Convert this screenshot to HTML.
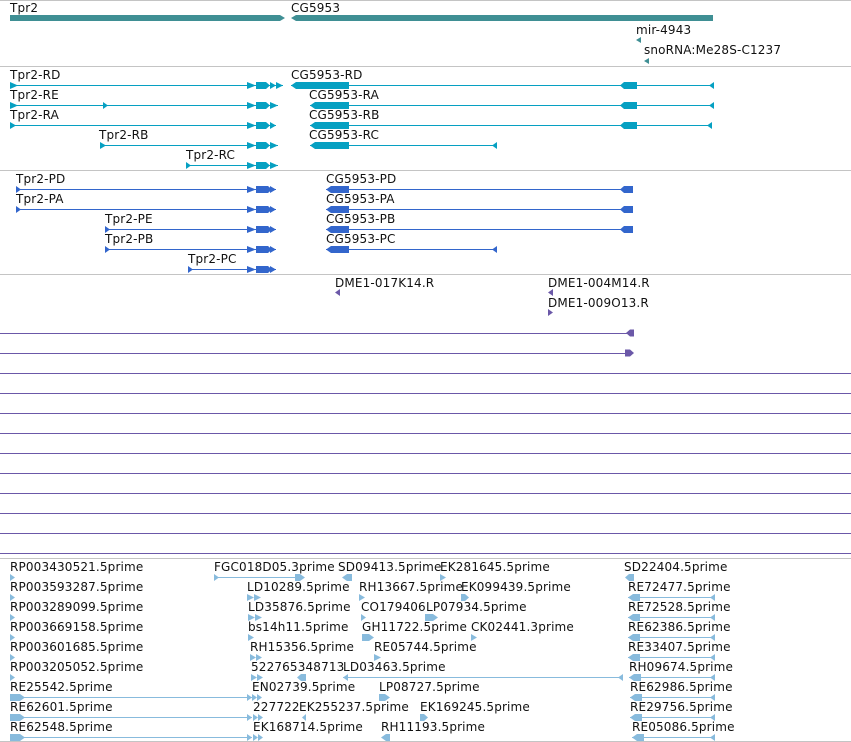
<!DOCTYPE html>
<html><head><meta charset="utf-8"><style>
html,body{margin:0;padding:0;background:#fff;width:851px;height:742px;overflow:hidden}
svg{display:block}
text{font-family:"DejaVu Sans","Liberation Sans",sans-serif;font-size:12px;letter-spacing:0.15px;fill:#111}
</style></head><body>
<svg width="851" height="742" viewBox="0 0 851 742" xmlns="http://www.w3.org/2000/svg">
<g stroke="#c4c4c4" stroke-width="1">
<line x1="0" y1="0.5" x2="851" y2="0.5"/>
<line x1="0" y1="66.5" x2="851" y2="66.5"/>
<line x1="0" y1="170.5" x2="851" y2="170.5"/>
<line x1="0" y1="274.5" x2="851" y2="274.5"/>
<line x1="0" y1="558.5" x2="851" y2="558.5"/>
<line x1="0" y1="741.5" x2="851" y2="741.5"/>
</g>

<g fill="#3f8f94">
<path d="M10 15H280L285 18L280 21H10Z"/>
<path d="M296 15H713V21H296L291 18Z"/>
<path d="M636 40L641 37V43Z"/>
<path d="M644 61L649 58V64Z"/>
</g>
<text x="10" y="12">Tpr2</text>
<text x="291" y="12">CG5953</text>
<text x="636" y="34">mir-4943</text>
<text x="644" y="54">snoRNA:Me28S-C1237</text>

<g stroke="#06a0c2" stroke-width="1">
<line x1="10" y1="85.5" x2="283" y2="85.5"/>
<line x1="10" y1="105.5" x2="278" y2="105.5"/>
<line x1="10" y1="125.5" x2="276" y2="125.5"/>
<line x1="100" y1="145.5" x2="278" y2="145.5"/>
<line x1="186" y1="165.5" x2="278" y2="165.5"/>
<line x1="291" y1="85.5" x2="714" y2="85.5"/>
<line x1="310" y1="105.5" x2="714" y2="105.5"/>
<line x1="310" y1="125.5" x2="712" y2="125.5"/>
<line x1="310" y1="145.5" x2="497" y2="145.5"/>
</g>
<g fill="#06a0c2">
<path d="M10 82L18 85.5L10 89Z"/><path d="M10 102L18 105.5L10 109Z"/><path d="M10 122L16 125.5L10 129Z"/>
<path d="M100 142L106 145.5L100 149Z"/><path d="M186 162L191 165.5L186 169Z"/>
<path d="M103 102L108 105.5L103 109Z"/>
<path d="M247 82L256 85.5L247 89Z M256 82H266L270 85.5L266 89H256Z M270 82L276 85.5L270 89Z M276 82L283 85.5L276 89Z"/>
<path d="M247 102L256 105.5L247 109Z M256 102H266L270 105.5L266 109H256Z M270 102L278 105.5L270 109Z"/>
<path d="M247 122L256 125.5L247 129Z M256 122H266L270 125.5L266 129H256Z M270 122L276 125.5L270 129Z"/>
<path d="M247 142L256 145.5L247 149Z M256 142H266L270 145.5L266 149H256Z M270 142L278 145.5L270 149Z"/>
<path d="M247 162L256 165.5L247 169Z M256 162H266L270 165.5L266 169H256Z M270 162L278 165.5L270 169Z"/>
<path d="M296 82H349V89H296L291 85.5Z"/>
<path d="M315 102H349V109H315L310 105.5Z"/>
<path d="M315 122H349V129H315L310 125.5Z"/>
<path d="M315 142H349V149H315L310 145.5Z"/>
<path d="M624 82H637V89H624L620 85.5Z"/><path d="M624 102H637V109H624L620 105.5Z"/><path d="M624 122H637V129H624L620 125.5Z"/>
<path d="M709 85.5L714 82V89Z"/><path d="M709 105.5L714 102V109Z"/><path d="M707 125.5L712 122V129Z"/>
<path d="M492 145.5L497 142V149Z"/>
</g>
<text x="10" y="79">Tpr2-RD</text>
<text x="10" y="99">Tpr2-RE</text>
<text x="10" y="119">Tpr2-RA</text>
<text x="99" y="139">Tpr2-RB</text>
<text x="186" y="159">Tpr2-RC</text>
<text x="291" y="79">CG5953-RD</text>
<text x="309" y="99">CG5953-RA</text>
<text x="309" y="119">CG5953-RB</text>
<text x="309" y="139">CG5953-RC</text>

<g stroke="#3366cc" stroke-width="1">
<line x1="16" y1="189.5" x2="276" y2="189.5"/>
<line x1="16" y1="209.5" x2="276" y2="209.5"/>
<line x1="105" y1="229.5" x2="276" y2="229.5"/>
<line x1="105" y1="249.5" x2="276" y2="249.5"/>
<line x1="188" y1="269.5" x2="276" y2="269.5"/>
<line x1="326" y1="189.5" x2="633" y2="189.5"/>
<line x1="326" y1="209.5" x2="633" y2="209.5"/>
<line x1="326" y1="229.5" x2="633" y2="229.5"/>
<line x1="326" y1="249.5" x2="497" y2="249.5"/>
</g>
<g fill="#3366cc">
<path d="M16 186L21 189.5L16 193Z"/><path d="M16 206L21 209.5L16 213Z"/><path d="M105 226L110 229.5L105 233Z"/><path d="M105 246L110 249.5L105 253Z"/><path d="M188 266L193 269.5L188 273Z"/>
<path d="M247 186L256 189.5L247 193Z M256 186H268L272 189.5L268 193H256Z M270 186L276 189.5L270 193Z"/>
<path d="M247 206L256 209.5L247 213Z M256 206H268L272 209.5L268 213H256Z M270 206L276 209.5L270 213Z"/>
<path d="M247 226L256 229.5L247 233Z M256 226H268L272 229.5L268 233H256Z M270 226L276 229.5L270 233Z"/>
<path d="M247 246L256 249.5L247 253Z M256 246H268L272 249.5L268 253H256Z M270 246L276 249.5L270 253Z"/>
<path d="M247 266L256 269.5L247 273Z M256 266H268L272 269.5L268 273H256Z M270 266L276 269.5L270 273Z"/>
<path d="M331 186H349V193H331L326 189.5Z"/><path d="M331 206H349V213H331L326 209.5Z"/><path d="M331 226H349V233H331L326 229.5Z"/><path d="M331 246H349V253H331L326 249.5Z"/>
<path d="M624 186H633V193H624L620 189.5Z"/><path d="M624 206H633V213H624L620 209.5Z"/><path d="M624 226H633V233H624L620 229.5Z"/>
<path d="M492 249.5L497 246V253Z"/>
</g>
<text x="16" y="183">Tpr2-PD</text>
<text x="16" y="203">Tpr2-PA</text>
<text x="105" y="223">Tpr2-PE</text>
<text x="105" y="243">Tpr2-PB</text>
<text x="188" y="263">Tpr2-PC</text>
<text x="326" y="183">CG5953-PD</text>
<text x="326" y="203">CG5953-PA</text>
<text x="326" y="223">CG5953-PB</text>
<text x="326" y="243">CG5953-PC</text>

<g fill="#6b58a8">
<path d="M335 292.5L340 289V296Z"/>
<path d="M548 292.5L553 289V296Z"/>
<path d="M548 309V316L553 312.5Z"/>
<path d="M630 329.5H634V336.5H630L626 333Z"/>
<path d="M625 349.5H630L634 353L630 356.5H625Z"/>
</g>
<g stroke="#6b58a8" stroke-width="1">
<line x1="0" y1="333.5" x2="628" y2="333.5"/>
<line x1="0" y1="353.5" x2="628" y2="353.5"/>
<line x1="0" y1="373.5" x2="851" y2="373.5"/>
<line x1="0" y1="393.5" x2="851" y2="393.5"/>
<line x1="0" y1="413.5" x2="851" y2="413.5"/>
<line x1="0" y1="433.5" x2="851" y2="433.5"/>
<line x1="0" y1="453.5" x2="851" y2="453.5"/>
<line x1="0" y1="473.5" x2="851" y2="473.5"/>
<line x1="0" y1="493.5" x2="851" y2="493.5"/>
<line x1="0" y1="513.5" x2="851" y2="513.5"/>
<line x1="0" y1="533.5" x2="851" y2="533.5"/>
<line x1="0" y1="553.5" x2="851" y2="553.5"/>
</g>
<text x="335" y="287">DME1-017K14.R</text>
<text x="548" y="287">DME1-004M14.R</text>
<text x="548" y="307">DME1-009O13.R</text>

<g stroke="#88bbdd" stroke-width="1">
<line x1="214" y1="577.5" x2="300" y2="577.5"/>
<line x1="628" y1="597.5" x2="715" y2="597.5"/>
<line x1="628" y1="617.5" x2="715" y2="617.5"/>
<line x1="628" y1="637.5" x2="715" y2="637.5"/>
<line x1="628" y1="657.5" x2="715" y2="657.5"/>
<line x1="343" y1="677.5" x2="623" y2="677.5"/>
<line x1="629" y1="677.5" x2="715" y2="677.5"/>
<line x1="10" y1="697.5" x2="252" y2="697.5"/>
<line x1="630" y1="697.5" x2="715" y2="697.5"/>
<line x1="10" y1="717.5" x2="252" y2="717.5"/>
<line x1="630" y1="717.5" x2="715" y2="717.5"/>
<line x1="10" y1="737.5" x2="252" y2="737.5"/>
<line x1="632" y1="737.5" x2="715" y2="737.5"/>
</g>
<g fill="#88bbdd">
<path d="M10 574L15 577.5L10 581Z M10 594L15 597.5L10 601Z M10 614L15 617.5L10 621Z M10 634L15 637.5L10 641Z M10 654L15 657.5L10 661Z M10 674L15 677.5L10 681Z"/>
<path d="M10 694H20L25 697.5L20 701H10Z M10 714H20L25 717.5L20 721H10Z M10 734H20L25 737.5L20 741H10Z"/>
<path d="M247 694L252 697.5L247 701Z M252 694L257 697.5L252 701Z M257 694L262 697.5L257 701Z"/>
<path d="M247 714L252 717.5L247 721Z M253 714L258 717.5L253 721Z M258 714L263 717.5L258 721Z"/>
<path d="M247 734L252 737.5L247 741Z M253 734L258 737.5L253 741Z M258 734L263 737.5L258 741Z"/>
<path d="M214 574L219 577.5L214 581Z M295 574H300L305 577.5L300 581H295Z"/>
<path d="M347 574H352V581H347L342 577.5Z"/>
<path d="M440 574L446 577.5L440 581Z"/>
<path d="M629 574H634V581H629L625 577.5Z"/>
<path d="M247 594L254 597.5L247 601Z M254 594L261 597.5L254 601Z"/>
<path d="M359 594L365 597.5L359 601Z"/>
<path d="M461 594H465L469 597.5L465 601H461Z"/>
<path d="M633 594H640V601H633L628 597.5Z M710 597.5L715 594V601Z"/>
<path d="M248 614L255 617.5L248 621Z M255 614L262 617.5L255 621Z"/>
<path d="M361 614L366 617.5L361 621Z"/>
<path d="M425 614H433L438 617.5L433 621H425Z"/>
<path d="M633 614H640V621H633L628 617.5Z M710 617.5L715 614V621Z"/>
<path d="M248 634L254 637.5L248 641Z"/>
<path d="M362 634H369L374 637.5L369 641H362Z"/>
<path d="M471 634L477 637.5L471 641Z"/>
<path d="M633 634H640V641H633L628 637.5Z M710 637.5L715 634V641Z"/>
<path d="M250 654L256 657.5L250 661Z M256 654L262 657.5L256 661Z"/>
<path d="M374 654L381 657.5L374 661Z"/>
<path d="M633 654H640V661H633L628 657.5Z M710 657.5L715 654V661Z"/>
<path d="M251 674L257 677.5L251 681Z M257 674L263 677.5L257 681Z"/>
<path d="M301 674H306V681H301L297 677.5Z"/>
<path d="M343 677.5L348 674V681Z M618 677.5L623 674V681Z"/>
<path d="M634 674H641V681H634L629 677.5Z M710 677.5L715 674V681Z"/>
<path d="M379 694H385L390 697.5L385 701H379Z"/>
<path d="M635 694H642V701H635L630 697.5Z M710 697.5L715 694V701Z"/>
<path d="M302 717.5L306 714V721Z"/>
<path d="M420 714H424L428 717.5L424 721H420Z"/>
<path d="M635 714H642V721H635L630 717.5Z M710 717.5L715 714V721Z"/>
<path d="M386 734H390V741H386L381 737.5Z"/>
<path d="M637 734H644V741H637L632 737.5Z M710 737.5L715 734V741Z"/>
</g>
<g>
<text x="10" y="571">RP003430521.5prime</text>
<text x="214" y="571">FGC018D05.3prime</text>
<text x="338" y="571">SD09413.5prime</text>
<text x="440" y="571">EK281645.5prime</text>
<text x="624" y="571">SD22404.5prime</text>

<text x="10" y="591">RP003593287.5prime</text>
<text x="247" y="591">LD10289.5prime</text>
<text x="359" y="591">RH13667.5prime</text>
<text x="461" y="591">EK099439.5prime</text>
<text x="628" y="591">RE72477.5prime</text>

<text x="10" y="611">RP003289099.5prime</text>
<text x="248" y="611">LD35876.5prime</text>
<text x="361" y="611">CO179406</text>
<text x="426" y="611">LP07934.5prime</text>
<text x="628" y="611">RE72528.5prime</text>

<text x="10" y="631">RP003669158.5prime</text>
<text x="248" y="631">bs14h11.5prime</text>
<text x="362" y="631">GH11722.5prime</text>
<text x="471" y="631">CK02441.3prime</text>
<text x="628" y="631">RE62386.5prime</text>

<text x="10" y="651">RP003601685.5prime</text>
<text x="250" y="651">RH15356.5prime</text>
<text x="374" y="651">RE05744.5prime</text>
<text x="628" y="651">RE33407.5prime</text>

<text x="10" y="671">RP003205052.5prime</text>
<text x="251" y="671">522765348713</text>
<text x="343" y="671">LD03463.5prime</text>
<text x="629" y="671">RH09674.5prime</text>

<text x="10" y="691">RE25542.5prime</text>
<text x="252" y="691">EN02739.5prime</text>
<text x="379" y="691">LP08727.5prime</text>
<text x="630" y="691">RE62986.5prime</text>

<text x="10" y="711">RE62601.5prime</text>
<text x="253" y="711">227722</text>
<text x="299" y="711">EK255237.5prime</text>
<text x="420" y="711">EK169245.5prime</text>
<text x="630" y="711">RE29756.5prime</text>

<text x="10" y="731">RE62548.5prime</text>
<text x="253" y="731">EK168714.5prime</text>
<text x="381" y="731">RH11193.5prime</text>
<text x="632" y="731">RE05086.5prime</text>
</g>
</svg>
</body></html>
